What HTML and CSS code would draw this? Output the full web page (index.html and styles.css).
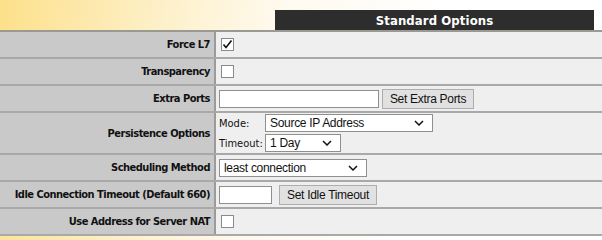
FILE: index.html
```html
<!DOCTYPE html>
<html>
<head>
<meta charset="utf-8">
<link rel="stylesheet" href="styles.css">
</head>
<body>
<div class="page">
  <div class="head">
    <div class="title">Standard Options</div>
  </div>
  <div class="table">
    <div class="row">
      <div class="label">Force L7</div>
      <div class="value"><span class="cb checked"><svg viewBox="0 0 13 13" width="13" height="13"><path d="M2.5 6.5 L5 9.5 L10.5 2.5" fill="none" stroke="#111" stroke-width="1.6"/></svg></span></div>
    </div>
    <div class="row">
      <div class="label">Transparency</div>
      <div class="value"><span class="cb"></span></div>
    </div>
    <div class="row">
      <div class="label">Extra Ports</div>
      <div class="value"><span class="input wide"></span><span class="btn">Set Extra Ports</span></div>
    </div>
    <div class="row tall">
      <div class="label">Persistence Options</div>
      <div class="value stack">
        <div class="line"><span class="small lbl">Mode:</span><span class="select mode">Source IP Address<svg class="chev" viewBox="0 0 10 6" width="10" height="6"><path d="M1 1 L5 5 L9 1" fill="none" stroke="#111" stroke-width="1.5"/></svg></span></div>
        <div class="line"><span class="small lbl">Timeout:</span><span class="select day">1 Day<svg class="chev" viewBox="0 0 10 6" width="10" height="6"><path d="M1 1 L5 5 L9 1" fill="none" stroke="#111" stroke-width="1.5"/></svg></span></div>
      </div>
    </div>
    <div class="row">
      <div class="label">Scheduling Method</div>
      <div class="value"><span class="select sched">least connection<svg class="chev" viewBox="0 0 10 6" width="10" height="6"><path d="M1 1 L5 5 L9 1" fill="none" stroke="#111" stroke-width="1.5"/></svg></span></div>
    </div>
    <div class="row">
      <div class="label">Idle Connection Timeout (Default 660)</div>
      <div class="value"><span class="input narrow"></span><span class="btn idle">Set Idle Timeout</span></div>
    </div>
    <div class="row">
      <div class="label">Use Address for Server NAT</div>
      <div class="value"><span class="cb"></span></div>
    </div>
  </div>
</div>
</body>
</html>
```
FILE: styles.css
```css
html, body {
  margin: 0;
  padding: 0;
}
body {
  width: 602px;
  height: 240px;
  overflow: hidden;
  background: linear-gradient(100deg, #fde08a 0%, #fdf0c8 25%, #fffaf0 45%, #ffffff 70%);
  font-family: "DejaVu Sans Condensed", "DejaVu Sans", sans-serif;
}
.page {
  display: flex;
  flex-direction: column;
}
.head {
  height: 30px;
  display: flex;
  align-items: flex-end;
  padding-left: 275px;
}
.title {
  width: 319px;
  height: 20px;
  background: #2d2d2d;
  color: #fff;
  font-weight: bold;
  font-size: 13px;
  letter-spacing: 0.1px;
  display: flex;
  align-items: center;
  justify-content: center;
}
.table {
  border-top: 2px solid #9a9a92;
  display: flex;
  flex-direction: column;
}
.row {
  display: grid;
  grid-template-columns: 216px 1fr;
  height: 25px;
  border-bottom: 2px solid #a9a9a9;
}
.row.tall {
  height: 40px;
}
.label {
  background: #c9c9c9;
  border-right: 2px solid #9b9b9b;
  font-weight: bold;
  font-size: 11px;
  letter-spacing: -0.5px;
  white-space: nowrap;
  color: #111;
  display: flex;
  align-items: center;
  justify-content: flex-end;
  padding-right: 4px;
}
.value {
  background: #efefef;
  display: flex;
  align-items: center;
  padding-left: 3px;
  gap: 3px;
}
.cb {
  width: 11px;
  height: 11px;
  border: 1px solid #8a8a8a;
  background: #fff;
  margin-left: 2px;
  display: inline-flex;
  position: relative;
}
.cb svg {
  position: absolute;
  left: -1px;
  top: -1px;
}
.input {
  border: 1px solid #8f8f8f;
  background: #fff;
  box-sizing: border-box;
}
.input.wide {
  width: 160px;
  height: 18px;
}
.input.narrow {
  width: 53px;
  height: 18px;
}
.btn {
  font-family: "Liberation Sans", Arial, sans-serif;
  font-size: 12px;
  letter-spacing: -0.3px;
  color: #111;
  background: #e1e1e1;
  border: 1px solid #adadad;
  height: 20px;
  box-sizing: border-box;
  display: inline-flex;
  align-items: center;
  justify-content: center;
}
.btn:not(.idle) {
  width: 92px;
}
.btn.idle {
  width: 98px;
  margin-left: 4px;
}
.select {
  font-family: "Liberation Sans", Arial, sans-serif;
  font-size: 12px;
  letter-spacing: -0.3px;
  color: #111;
  background: #fff;
  border: 1px solid #8f8f8f;
  height: 18px;
  box-sizing: border-box;
  display: inline-flex;
  align-items: center;
  justify-content: space-between;
  padding: 0 8px 0 4px;
}
.select.mode { width: 168px; }
.select.day { width: 76px; }
.select.sched { width: 148px; }
.stack {
  flex-direction: column;
  align-items: flex-start;
  justify-content: center;
  gap: 2px;
}
.line {
  display: flex;
  align-items: center;
}
.small {
  font-size: 11px;
  font-family: "DejaVu Sans Condensed", "DejaVu Sans", sans-serif;
  color: #111;
  white-space: nowrap;
}
.lbl {
  width: 46px;
}
```
